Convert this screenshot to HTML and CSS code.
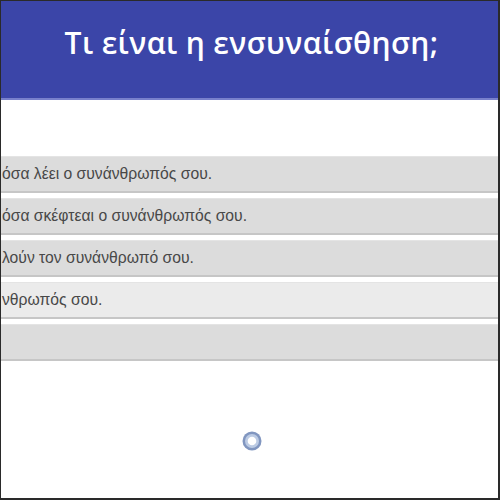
FILE: index.html
```html
<!DOCTYPE html>
<html lang="el">
<head>
<meta charset="utf-8">
<link rel="stylesheet" href="styles.css">
</head>
<body>
<div class="frame">
  <header class="header">
    <h1 class="title">Τι είναι η ενσυναίσθηση;</h1>
  </header>
  <main class="content">
    <div class="options">
      <div class="option"><span class="label">όσα λέει ο συνάνθρωπός σου.</span></div>
      <div class="option"><span class="label">όσα σκέφτεαι ο συνάνθρωπός σου.</span></div>
      <div class="option"><span class="label">λούν τον συνάνθρωπό σου.</span></div>
      <div class="option light"><span class="label">νθρωπός σου.</span></div>
      <div class="option"><span class="label"></span></div>
    </div>
    <div class="indicator">
      <svg width="22" height="22" viewBox="0 0 22 22">
        <circle cx="11" cy="11" r="9.5" fill="#8196c0"/>
        <circle cx="11" cy="11" r="7" fill="#bccbe4"/>
        <circle cx="11" cy="11" r="4.3" fill="#ffffff"/>
      </svg>
    </div>
  </main>
</div>
</body>
</html>
```
FILE: styles.css
```css
html, body {
  margin: 0;
  padding: 0;
  background: #ffffff;
}
.frame {
  width: 500px;
  height: 500px;
  box-sizing: border-box;
  border-style: solid;
  border-color: #2a2a2a;
  border-width: 1px 2px 2px 1px;
  overflow: hidden;
  display: flex;
  flex-direction: column;
}
.header {
  background: #3b45a8;
  height: 97px;
  border-bottom: 2px solid #7880cc;
  display: flex;
  justify-content: center;
  align-items: flex-start;
  flex-shrink: 0;
}
.title {
  margin: 0;
  padding-top: 22px;
  color: #ffffff;
  font-family: "Open Sans", "Noto Sans", sans-serif;
  font-weight: 600;
  font-size: 30px;
  line-height: 40px;
  letter-spacing: 0.4px;
  padding-left: 4px;
}
.content {
  flex: 1;
  display: flex;
  flex-direction: column;
  padding-top: 56px;
}
.options {
  display: flex;
  flex-direction: column;
  gap: 5px;
}
.option {
  height: 34px;
  background: #dcdcdc;
  border-top: 1px solid #e4e4e4;
  border-bottom: 2px solid #c6c6c6;
  display: flex;
  align-items: center;
  overflow: hidden;
}
.option.light {
  background: #ebebeb;
}
.label {
  font-family: "Liberation Sans", Arial, sans-serif;
  font-size: 15.7px;
  color: #484848;
  white-space: nowrap;
  padding-left: 1px;
}
.indicator {
  display: flex;
  justify-content: center;
  padding-top: 69px;
  padding-left: 5px;
}
.indicator svg {
  display: block;
}
```
